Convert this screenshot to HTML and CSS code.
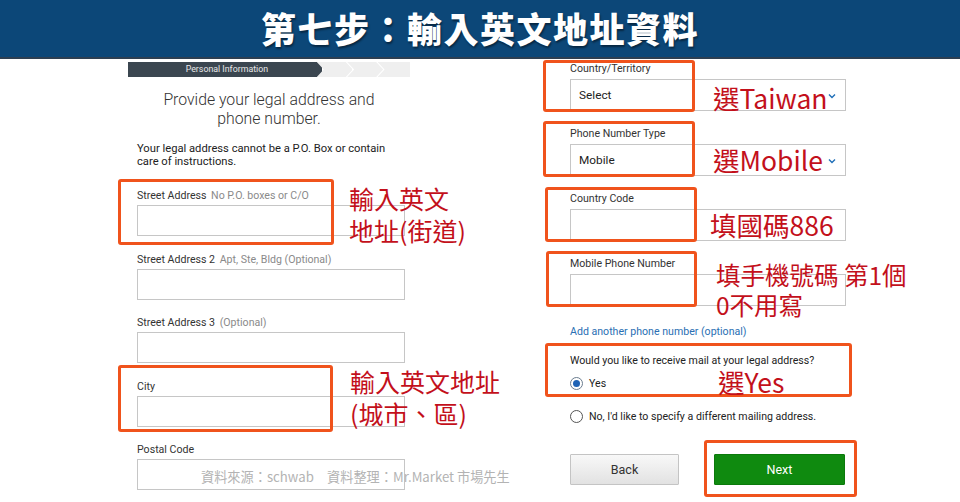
FILE: index.html
```html
<!DOCTYPE html>
<html lang="zh-Hant">
<head>
    <meta charset="UTF-8">
    <meta name="viewport" content="width=device-width, initial-scale=1.0">
    <title>第七步：輸入英文地址資料</title>
    <link rel="stylesheet" href="styles.css">
</head>
<body>
    <header class="banner">
        <h1>第七步：輸入英文地址資料</h1>
    </header>

    <main class="page">
        <section class="col-left">
            <div class="steps">
                <div class="step current">Personal Information</div>
                <div class="step"></div>
                <div class="step"></div>
                <div class="step last"></div>
            </div>
            <h2 class="form-title">Provide your legal address and<br>phone number.</h2>
            <div class="form-body">
                <p class="note">Your legal address cannot be a P.O. Box or contain<br>care of instructions.</p>
                <div class="field">
                    <label>Street Address <span class="hint">No P.O. boxes or C/O</span></label>
                    <div class="input"></div>
                </div>
                <div class="field">
                    <label>Street Address 2 <span class="hint">Apt, Ste, Bldg (Optional)</span></label>
                    <div class="input"></div>
                </div>
                <div class="field">
                    <label>Street Address 3 <span class="hint">(Optional)</span></label>
                    <div class="input"></div>
                </div>
                <div class="field">
                    <label>City</label>
                    <div class="input"></div>
                </div>
                <div class="field">
                    <label>Postal Code</label>
                    <div class="input"></div>
                </div>
            </div>
        </section>

        <section class="col-right">
            <div class="field">
                <label>Country/Territory</label>
                <div class="input select">Select
                    <svg class="caret" width="8" height="6" viewBox="0 0 8 6"><path d="M1 1.5 L4 4.5 L7 1.5" fill="none" stroke="#1f6fb8" stroke-width="1.4"/></svg>
                </div>
            </div>
            <div class="field">
                <label>Phone Number Type</label>
                <div class="input select">Mobile
                    <svg class="caret" width="8" height="6" viewBox="0 0 8 6"><path d="M1 1.5 L4 4.5 L7 1.5" fill="none" stroke="#1f6fb8" stroke-width="1.4"/></svg>
                </div>
            </div>
            <div class="field">
                <label>Country Code</label>
                <div class="input"></div>
            </div>
            <div class="field">
                <label>Mobile Phone Number</label>
                <div class="input"></div>
            </div>
            <a class="link">Add another phone number (optional)</a>
            <p class="question">Would you like to receive mail at your legal address?</p>
            <div class="radio-row first"><span class="radio checked"></span>Yes</div>
            <div class="radio-row"><span class="radio"></span>No, I'd like to specify a different mailing address.</div>
            <div class="buttons">
                <button class="btn back">Back</button>
                <button class="btn next">Next</button>
            </div>
        </section>
    </main>

    <!-- annotation layer drawn over the screenshot -->
    <div class="marks">
        <div class="box box-street"></div>
        <div class="box box-city"></div>
        <div class="box box-country"></div>
        <div class="box box-type"></div>
        <div class="box box-code"></div>
        <div class="box box-mobile"></div>
        <div class="box box-mail"></div>
        <div class="box box-next"></div>

        <div class="tip tip-street">輸入英文<br>地址(街道)</div>
        <div class="tip tip-city">輸入英文地址<br>(城市、區)</div>
        <div class="tip tip-country">選Taiwan</div>
        <div class="tip tip-type">選Mobile</div>
        <div class="tip tip-code">填國碼886</div>
        <div class="tip tip-mobile">填手機號碼 第1個<br>0不用寫</div>
        <div class="tip tip-yes">選Yes</div>

        <div class="source">資料來源：schwab　資料整理：Mr.Market 市場先生</div>
    </div>
</body>
</html>
```

FILE: styles.css
```css
body {
    margin: 0;
    width: 960px;
    height: 502px;
    overflow: hidden;
    position: relative;
    background: #ffffff;
    font-family: Roboto, "Liberation Sans", "Noto Sans CJK TC", sans-serif;
    color: #222;
}

.banner {
    height: 57px;
    background: #0c4778;
    border-bottom: 2px solid #2d3f52;
    display: flex;
    justify-content: center;
    align-items: center;
}

.banner h1 {
    margin: 0 0 2px 0;
    font-family: "Noto Sans CJK TC", sans-serif;
    font-weight: 900;
    font-size: 35px;
    letter-spacing: 1.5px;
    color: #ffffff;
    text-shadow: 1px 2px 2px rgba(0, 0, 0, 0.45);
}

.page {
    display: flex;
    padding-top: 3px;
}

/* left column */
.col-left {
    margin-left: 128px;
    width: 282px;
}

.steps {
    display: flex;
    height: 15px;
}

.step {
    width: 36px;
    margin-left: -5px;
    background: #efefef;
    clip-path: polygon(0 0, 29px 0, 36px 50%, 29px 100%, 0 100%, 7px 50%);
}

.step.current {
    width: 197px;
    margin-left: 0;
    background: #3b4650;
    color: #e8e8e8;
    font-size: 8.8px;
    line-height: 15px;
    text-align: center;
    padding-left: 4px;
    box-sizing: border-box;
    clip-path: polygon(0 0, 190px 0, 197px 50%, 190px 100%, 0 100%);
}

.step.last {
    width: 33px;
    clip-path: polygon(0 0, 100% 0, 100% 100%, 0 100%, 7px 50%);
}

.form-title {
    margin: 13px 0 0 0;
    font-size: 15.8px;
    font-weight: 300;
    line-height: 19px;
    text-align: center;
    color: #333;
}

.form-body {
    padding-left: 9px;
}

.note {
    margin: 15px 0 21px 0;
    font-size: 11.2px;
    line-height: 12.5px;
    color: #222;
}

.field label {
    display: block;
    font-size: 10.6px;
    line-height: 14px;
    color: #333;
}

.hint {
    color: #8a8a8a;
    margin-left: 2px;
}

.input {
    box-sizing: border-box;
    height: 31px;
    border: 1px solid #c6c6c6;
    background: #fff;
}

.col-left .field label {
    margin-bottom: 2px;
}

.col-left .input {
    width: 268px;
    margin-bottom: 16.5px;
}

/* right column */
.col-right {
    margin-left: 160px;
    width: 276px;
}

.col-right .field label {
    margin-bottom: 3px;
}

.col-right .input {
    height: 32px;
    margin-bottom: 16px;
}

.select {
    display: flex;
    align-items: center;
    justify-content: space-between;
    padding: 0 9px 0 8px;
    font-size: 11.8px;
    color: #222;
}

.caret {
    margin-top: 2px;
}

.link {
    display: block;
    margin-top: 19px;
    font-size: 10.6px;
    line-height: 14px;
    color: #2a6fb3;
}

.question {
    margin: 15px 0 7px 0;
    font-size: 10.6px;
    line-height: 14px;
    color: #222;
}

.radio-row {
    display: flex;
    align-items: center;
    height: 16px;
    font-size: 10.6px;
    color: #222;
}

.radio-row.first {
    margin-bottom: 17px;
}

.radio {
    box-sizing: border-box;
    width: 13px;
    height: 13px;
    border: 1px solid #555;
    border-radius: 50%;
    margin-right: 6px;
    display: flex;
    align-items: center;
    justify-content: center;
}

.radio.checked {
    border-color: #6a7c8e;
}

.radio.checked::after {
    content: "";
    width: 7px;
    height: 7px;
    border-radius: 50%;
    background: #1f63b5;
}

.buttons {
    display: flex;
    gap: 35px;
    margin-top: 30px;
}

.btn {
    height: 31px;
    font-family: Roboto, "Liberation Sans", sans-serif;
    font-size: 12.5px;
    border-radius: 1px;
}

.btn.back {
    width: 109px;
    color: #333;
    background: linear-gradient(#f8f8f8, #e2e2e2);
    border: 1px solid #c4c4c4;
}

.btn.next {
    width: 131px;
    color: #ffffff;
    background: #0f8a0f;
    border: 1px solid #0b7a0b;
}

/* annotations */
.marks {
    position: absolute;
    inset: 0;
    pointer-events: none;
}

.box {
    position: absolute;
    box-sizing: border-box;
    border: 3px solid #f0531c;
    border-radius: 3px;
}

.box-street  { left: 118px; top: 179px; width: 216px; height: 66px; }
.box-city    { left: 118px; top: 365px; width: 215px; height: 67px; }
.box-country { left: 543px; top: 60px;  width: 152px; height: 52px; }
.box-type    { left: 543px; top: 121px; width: 152px; height: 56px; }
.box-code    { left: 545px; top: 187px; width: 152px; height: 55px; }
.box-mobile  { left: 546px; top: 251px; width: 151px; height: 56px; }
.box-mail    { left: 545px; top: 343px; width: 307px; height: 54px; }
.box-next    { left: 704px; top: 440px; width: 153px; height: 57px; }

.tip {
    position: absolute;
    font-family: "Noto Sans CJK TC", sans-serif;
    font-size: 25px;
    line-height: 32px;
    color: #c3101b;
    white-space: nowrap;
}

.tip-street  { left: 349px; top: 182px; }
.tip-city    { left: 350px; top: 365px; }
.tip-country { left: 713px; top: 82px; font-size: 26.5px; }
.tip-type    { left: 713px; top: 144px; font-size: 26.5px; }
.tip-code    { left: 710px; top: 209px; font-size: 26.5px; }
.tip-mobile  { left: 716px; top: 260px; font-size: 24.5px; line-height: 30px; }
.tip-yes     { left: 718px; top: 369px; font-size: 26.5px; line-height: 26px; }

.source {
    position: absolute;
    left: 201px;
    top: 467px;
    font-family: "Noto Sans CJK TC", sans-serif;
    font-size: 13.2px;
    color: #b3b3b3;
    white-space: nowrap;
}
```
